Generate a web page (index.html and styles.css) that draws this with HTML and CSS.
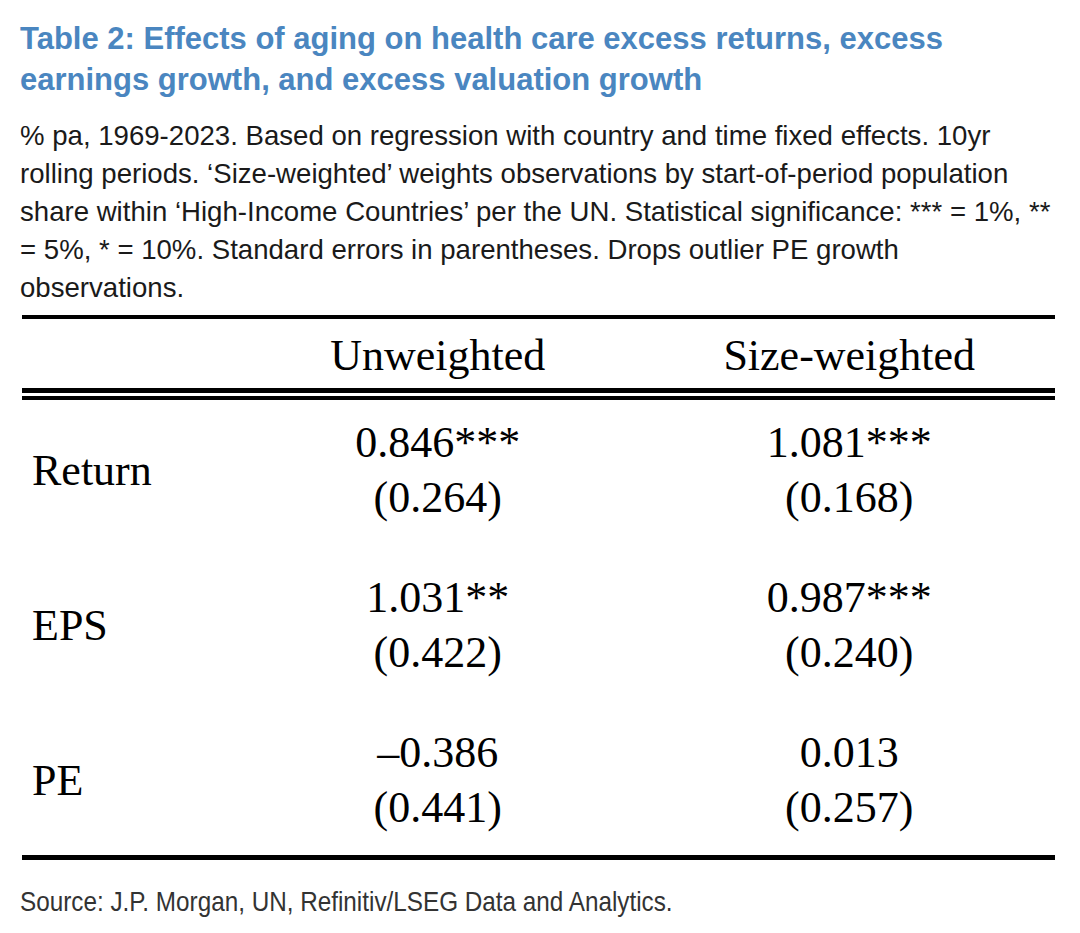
FILE: index.html
```html
<!DOCTYPE html>
<html lang="en">
<head>
<meta charset="utf-8">
<title>Table 2</title>
<link rel="stylesheet" href="styles.css">
</head>
<body>
<div class="page">
  <h1 class="title">Table 2: Effects of aging on health care excess returns, excess<br>earnings growth, and excess valuation growth</h1>
  <p class="note">% pa, 1969-2023. Based on regression with country and time fixed effects. 10yr<br>rolling periods. ‘Size-weighted’ weights observations by start-of-period population<br>share within ‘High-Income Countries’ per the UN. Statistical significance: *** = 1%, **<br>= 5%, * = 10%. Standard errors in parentheses. Drops outlier PE growth<br>observations.</p>
  <div class="table">
    <div class="thead">
      <div class="corner"></div>
      <div class="colh">Unweighted</div>
      <div class="colh">Size-weighted</div>
    </div>
    <div class="dbl"></div>
    <div class="tbody">
      <div class="row">
        <div class="label">Return</div>
        <div class="cell"><div>0.846***</div><div>(0.264)</div></div>
        <div class="cell"><div>1.081***</div><div>(0.168)</div></div>
      </div>
      <div class="row">
        <div class="label">EPS</div>
        <div class="cell"><div>1.031**</div><div>(0.422)</div></div>
        <div class="cell"><div>0.987***</div><div>(0.240)</div></div>
      </div>
      <div class="row">
        <div class="label">PE</div>
        <div class="cell"><div>–0.386</div><div>(0.441)</div></div>
        <div class="cell"><div>0.013</div><div>(0.257)</div></div>
      </div>
    </div>
  </div>
  <p class="source">Source: J.P. Morgan, UN, Refinitiv/LSEG Data and Analytics.</p>
</div>
</body>
</html>
```
FILE: styles.css
```css
html, body {
  margin: 0;
  padding: 0;
  background: #ffffff;
}

.page {
  padding: 18px 0 0 20px;
  width: 1040px;
}

.title {
  margin: 0;
  font-family: "Liberation Sans", Arial, sans-serif;
  font-weight: bold;
  font-size: 31px;
  line-height: 41px;
  color: #4a86c0;
  white-space: nowrap;
}

.note {
  margin: 17px 0 0;
  font-family: "Liberation Sans", Arial, sans-serif;
  font-size: 27.6px;
  line-height: 38px;
  color: #1a1a1a;
  white-space: nowrap;
}

.table {
  margin: 8px 0 0 2px;
  width: 1033px;
  border-top: 4px solid #000;
  border-bottom: 5px solid #000;
  font-family: "Liberation Serif", "Times New Roman", serif;
  font-size: 44px;
  line-height: 55px;
  color: #000;
}

.thead,
.row {
  display: grid;
  grid-template-columns: 210px 1fr 1fr;
  align-items: center;
}

.thead {
  padding: 9px 0 5px;
}

.colh,
.cell {
  text-align: center;
}

.dbl {
  height: 3px;
  border-top: 5px solid #000;
  border-bottom: 4px solid #000;
}

.tbody {
  display: flex;
  flex-direction: column;
  gap: 45px;
  padding: 15px 0 20px;
}

.label {
  padding-left: 10px;
}

.source {
  margin: 25px 0 0;
  font-family: "Liberation Sans", Arial, sans-serif;
  font-size: 28px;
  line-height: 34px;
  color: #333333;
  white-space: nowrap;
  transform: scaleX(0.867);
  transform-origin: left center;
}
```
